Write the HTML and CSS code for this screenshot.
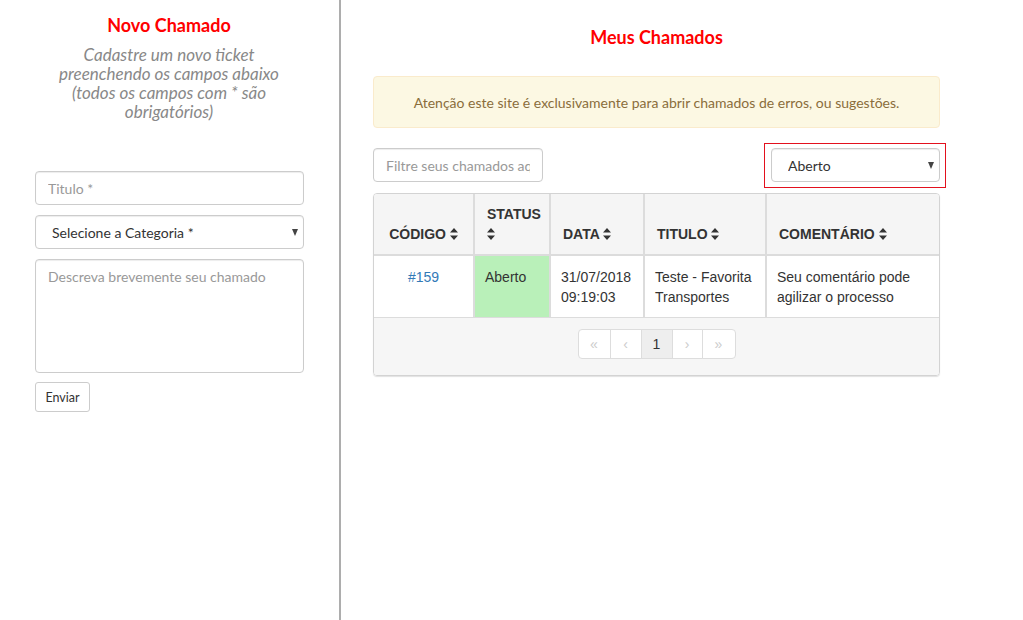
FILE: index.html
```html
<!DOCTYPE html>
<html lang="pt-BR">
<head>
<meta charset="utf-8">
<title>Chamados</title>
<link rel="stylesheet" href="styles.css">
</head>
<body>
<div class="page">
  <aside class="left">
    <h2 class="title">Novo Chamado</h2>
    <p class="subtitle">Cadastre um novo ticket<br>preenchendo os campos abaixo<br>(todos os campos com * são<br>obrigatórios)</p>
    <form class="form">
      <input class="field" type="text" placeholder="Titulo *">
      <div class="select-wrap">
        <select class="field select"><option>Selecione a Categoria *</option></select>
      </div>
      <textarea class="field area" placeholder="Descreva brevemente seu chamado"></textarea>
      <button class="btn" type="button">Enviar</button>
    </form>
  </aside>
  <main class="right">
    <div class="content">
      <h2 class="title title-right">Meus Chamados</h2>
      <div class="alert">Atenção este site é exclusivamente para abrir chamados de erros, ou sugestões.</div>
      <div class="toolbar">
        <input class="field filter" type="text" placeholder="Filtre seus chamados aqui">
        <div class="highlight">
          <div class="select-wrap">
            <select class="field select status"><option>Aberto</option></select>
          </div>
        </div>
      </div>
      <div class="table-box">
        <table class="grid">
          <colgroup>
            <col class="c1"><col class="c2"><col class="c3"><col class="c4"><col class="c5">
          </colgroup>
          <thead>
            <tr>
              <th class="center">CÓDIGO <svg class="sort" viewBox="0 0 8 12"><path d="M4 0 8 4.5H0Z M0 7.5H8L4 12Z"/></svg></th>
              <th>STATUS <svg class="sort" viewBox="0 0 8 12"><path d="M4 0 8 4.5H0Z M0 7.5H8L4 12Z"/></svg></th>
              <th>DATA <svg class="sort" viewBox="0 0 8 12"><path d="M4 0 8 4.5H0Z M0 7.5H8L4 12Z"/></svg></th>
              <th>TITULO <svg class="sort" viewBox="0 0 8 12"><path d="M4 0 8 4.5H0Z M0 7.5H8L4 12Z"/></svg></th>
              <th>COMENTÁRIO <svg class="sort" viewBox="0 0 8 12"><path d="M4 0 8 4.5H0Z M0 7.5H8L4 12Z"/></svg></th>
            </tr>
          </thead>
          <tbody>
            <tr>
              <td class="center"><a class="link" href="#">#159</a></td>
              <td class="open">Aberto</td>
              <td>31/07/2018 09:19:03</td>
              <td>Teste - Favorita Transportes</td>
              <td>Seu comentário pode agilizar o processo</td>
            </tr>
          </tbody>
        </table>
        <div class="pager-bar">
          <ul class="pager">
            <li class="off">«</li>
            <li class="off">‹</li>
            <li class="active">1</li>
            <li class="off">›</li>
            <li class="off">»</li>
          </ul>
        </div>
      </div>
    </div>
  </main>
</div>
</body>
</html>
```

FILE: styles.css
```css
* { box-sizing: border-box; }
html, body { margin: 0; padding: 0; background: #fff; }
body { font-family: Lato, "Open Sans", sans-serif; color: #333; font-size: 14px; }

.page { display: flex; height: 620px; }

.left {
  width: 341px;
  flex: none;
  border-right: 2px solid #adadad;
  padding: 14px 36px 0 35px;
}

.title {
  margin: 0;
  font-size: 18px;
  font-weight: 700;
  line-height: 22px;
  color: #f00;
  text-align: center;
}

.subtitle {
  margin: 9px -20px 0;
  font-style: italic;
  font-size: 17px;
  line-height: 19px;
  color: #888;
  text-align: center;
}

.form { margin-top: 50px; display: flex; flex-direction: column; align-items: flex-start; }

.field {
  display: block;
  width: 269px;
  height: 34px;
  padding: 6px 12px;
  font-family: Lato, "Open Sans", sans-serif;
  font-size: 14px;
  color: #555;
  background: #fff;
  border: 1px solid #ccc;
  border-radius: 4px;
  box-shadow: inset 0 1px 1px rgba(0,0,0,.075);
  outline: none;
  margin: 0 0 10px;
}
.field::placeholder { color: #999; }

.select-wrap { position: relative; }
.select-wrap::after {
  content: "";
  position: absolute;
  right: 6px;
  top: 14px;
  border-left: 3.5px solid transparent;
  border-right: 3.5px solid transparent;
  border-top: 7px solid #444;
}
.select {
  appearance: none;
  -webkit-appearance: none;
  color: #333;
  padding-left: 16px;
}

.area { height: 114px; resize: none; padding-top: 8px; margin-bottom: 9px; }

.btn {
  font-family: Lato, "Open Sans", sans-serif;
  font-size: 12.5px;
  color: #333;
  background: #fff;
  border: 1px solid #ccc;
  border-radius: 3px;
  height: 30px;
  width: 55px;
  padding: 0;
}

.right { flex: 1; }
.content { width: 567px; margin-left: 32px; padding-top: 26px; }

.alert {
  margin-top: 28px;
  height: 52px;
  display: flex;
  align-items: center;
  justify-content: center;
  background: #fcf8e3;
  border: 1px solid #faebcc;
  border-radius: 4px;
  color: #8a6d3b;
  font-size: 14px;
}

.toolbar {
  margin-top: 20px;
  display: flex;
  justify-content: space-between;
  align-items: flex-start;
}
.filter { width: 170px; margin: 0; }
.highlight {
  border: 1px solid #e3101d;
  padding: 4px 5px 5px 6px;
  margin: -5px -6px -6px 0;
}
.status { width: 169px; margin: 0; }

.table-box {
  margin-top: 11px;
  border: 1px solid #d3d3d3;
  border-radius: 4px;
  overflow: hidden;
  box-shadow: 0 1px 1px rgba(0,0,0,.12);
}

.grid {
  width: 100%;
  table-layout: fixed;
  border-collapse: collapse;
  font-family: "Liberation Sans", Arial, sans-serif;
  font-size: 14px;
  color: #333;
}
.c1 { width: 100px; }
.c2 { width: 76px; }
.c3 { width: 94px; }
.c4 { width: 122px; }
.c5 { width: 173px; }

.grid th {
  background: #f5f5f5;
  font-weight: 700;
  text-align: left;
  vertical-align: bottom;
  line-height: 20px;
  padding: 10px 12px 10px;
  border-left: 2px solid #dcdcdc;
  border-bottom: 2px solid #dcdcdc;
}
.grid th:first-child, .grid td:first-child { border-left: none; }
.grid td {
  vertical-align: top;
  line-height: 20px;
  padding: 11px 10px 10px;
  border-left: 2px solid #dcdcdc;
}
.grid .center { text-align: center; }
.sort { width: 8px; height: 12px; fill: #333; vertical-align: -1px; }
.link { color: #337ab7; text-decoration: none; }
.open { background: #b9f0b9; }

.pager-bar {
  background: #f6f6f6;
  border-top: 1px solid #dcdcdc;
  padding: 11px 0 16px;
  display: flex;
  justify-content: center;
}
.pager {
  display: flex;
  margin: 0;
  padding: 0;
  list-style: none;
  font-family: "Liberation Sans", Arial, sans-serif;
  font-size: 14px;
}
.pager li {
  height: 30px;
  width: 32px;
  display: flex;
  align-items: center;
  justify-content: center;
  background: #fff;
  border: 1px solid #ddd;
  margin-left: -1px;
  color: #ccc;
}
.pager li:first-child { border-radius: 4px 0 0 4px; margin-left: 0; width: 33px; }
.pager li:last-child { border-radius: 0 4px 4px 0; width: 34px; }
.pager li:nth-child(4) { width: 31px; }
.pager li.active { background: #eee; color: #333; }
```
